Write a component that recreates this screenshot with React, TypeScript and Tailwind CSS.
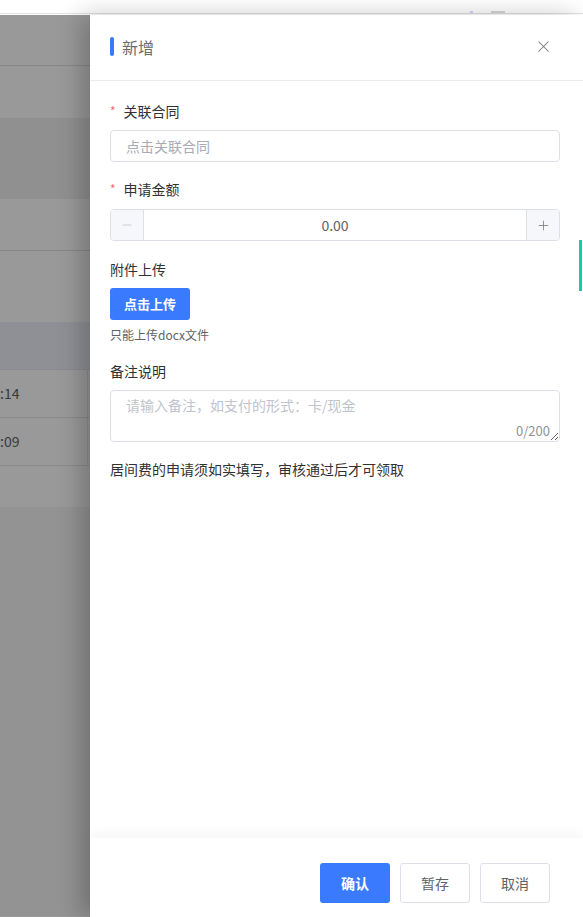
import { X, Minus, Plus } from "lucide-react";

const rows = [
  { h: "h-[52px]", bg: "bg-white", border: "border-b border-[#e2e2e2]" },
  { h: "h-[52px]", bg: "bg-white", border: "" },
  { h: "h-[81px]", bg: "bg-[#f0f0f0]", border: "" },
  { h: "h-[52px]", bg: "bg-white", border: "border-b border-[#e2e2e2]" },
  { h: "h-[71px]", bg: "bg-white", border: "" },
  { h: "h-[48px]", bg: "bg-[#eff1f8]", border: "border-b border-[#e6e8ee]" },
];

const times = [":14", ":09"];

function FieldLabel({ text, required }: { text: string; required?: boolean }) {
  return (
    <div className="flex h-[22px] items-center text-[14px] leading-[22px] text-[#303133]">
      {required && <span className="mr-[8px] mt-[-1px] text-[12px] text-[#f56c6c]">*</span>}
      {text}
    </div>
  );
}

export default function App() {
  return (
    <div className="relative h-[917px] w-[583px] overflow-hidden bg-white font-['Noto_Sans_CJK_SC',sans-serif]">
      {/* page behind the drawer */}
      <div className="flex h-[14px] items-end justify-end gap-[18px] border-b border-[#e4e4e4] pr-[78px]">
        <div className="h-[2px] w-[3px] bg-[#c9d8fb]" />
        <div className="h-[2px] w-[14px] bg-[#d6d6d6]" />
      </div>
      <div className="flex flex-col">
        {rows.map((r, i) => (
          <div key={i} className={`${r.h} ${r.bg} ${r.border}`} />
        ))}
        {times.map((t) => (
          <div key={t} className="flex h-[48px] border-b border-[#e6e6e6] bg-white">
            <div className="flex w-[88px] items-center border-r border-[#ececec] text-[14px] text-[#606266]">
              {t}
            </div>
          </div>
        ))}
        <div className="h-[41px] bg-white" />
        <div className="h-[409px] bg-[#f6f6f6]" />
      </div>

      {/* mask */}
      <div className="absolute inset-x-0 bottom-0 top-[15px] bg-black/40" />

      {/* drawer */}
      <div className="absolute bottom-0 right-0 top-[15px] flex w-[493px] flex-col bg-white shadow-[-10px_0_22px_rgba(0,0,0,0.22)]">
        <div className="flex h-[66px] items-center justify-between border-b border-[#ebebeb] pb-[2px] pl-[20px] pr-[30px]">
          <div className="flex items-center">
            <div className="mr-[8px] h-[19px] w-[4px] rounded-full bg-[#3a7afe]" />
            <span className="text-[16px] text-[#6b6b6b]">新增</span>
          </div>
          <X size={19} strokeWidth={1.3} className="text-[#7a7a7a]" />
        </div>

        <div className="relative flex flex-1 flex-col px-[20px] pt-[19px]">
          <FieldLabel text="关联合同" required />
          <div className="mt-[8px] flex h-[32px] w-[450px] items-center rounded-[4px] border border-[#dcdfe6] px-[15px] text-[14px] text-[#a8abb2]">
            点击关联合同
          </div>

          <div className="mt-[16px]">
            <FieldLabel text="申请金额" required />
          </div>
          <div className="mt-[9px] flex h-[32px] w-[450px] overflow-hidden rounded-[4px] border border-[#dcdfe6]">
            <div className="flex w-[33px] items-center justify-center border-r border-[#dcdfe6] bg-[#f5f7fa] text-[#b8bbc2]">
              <Minus size={14} strokeWidth={1.2} />
            </div>
            <div className="flex flex-1 items-center justify-center text-[14px] text-[#606266]">0.00</div>
            <div className="flex w-[33px] items-center justify-center border-l border-[#dcdfe6] bg-[#f5f7fa] text-[#707070]">
              <Plus size={15} strokeWidth={1.2} />
            </div>
          </div>

          <div className="mt-[17px]">
            <FieldLabel text="附件上传" />
          </div>
          <button className="mt-[8px] flex h-[32px] w-[80px] items-center justify-center rounded-[3px] bg-[#3a7afe] text-[13px] font-bold text-white">
            点击上传
          </button>
          <div className="mt-[5px] text-[12px] leading-[20px] text-[#606266]">只能上传docx文件</div>

          <div className="mt-[15px]">
            <FieldLabel text="备注说明" />
          </div>
          <div className="relative mt-[8px] w-[450px]">
            <textarea
              placeholder="请输入备注，如支付的形式：卡/现金"
              className="block h-[52px] w-full resize-y rounded-[4px] border border-[#dcdfe6] px-[15px] py-[4px] text-[14px] leading-[21px] text-[#606266] outline-none placeholder:text-[#c0c4cc]"
            />
            <span className="absolute bottom-[3px] right-[10px] text-[13px] leading-[16px] text-[#909399]">0/200</span>
          </div>

          <div className="mt-[16px] text-[14px] leading-[22px] text-[#303133]">居间费的申请须如实填写，审核通过后才可领取</div>

          <div className="absolute right-[1px] top-[159px] h-[51px] w-[3px] bg-[#19c9a8]" />
        </div>

        <div className="flex h-[79px] items-start justify-end gap-[10px] pr-[33px] pt-[25px] shadow-[0_-6px_10px_rgba(0,0,0,0.03)]">
          <button className="flex h-[40px] w-[70px] items-center justify-center rounded-[3px] bg-[#3a7afe] text-[14px] font-bold text-white">
            确认
          </button>
          <button className="flex h-[40px] w-[70px] items-center justify-center rounded-[3px] border border-[#dcdfe6] bg-white text-[14px] text-[#606266]">
            暂存
          </button>
          <button className="flex h-[40px] w-[70px] items-center justify-center rounded-[3px] border border-[#dcdfe6] bg-white text-[14px] text-[#606266]">
            取消
          </button>
        </div>
      </div>
    </div>
  );
}
